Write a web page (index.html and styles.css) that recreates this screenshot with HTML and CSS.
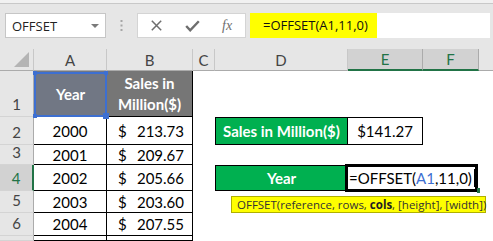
FILE: index.html
```html
<!DOCTYPE html>
<html lang="en">
<head>
  <meta charset="UTF-8">
  <title>OFFSET function</title>
  <link rel="stylesheet" href="styles.css">
</head>

<body>
  <div class="app">
    <div class="topLine"></div>

    <!-- Formula bar -->
    <div class="formulaBar">
      <div class="nameBox">
        <span>OFFSET</span>
        <span class="dropArrow"></span>
      </div>
      <div class="grip">
        <svg width="3" height="11" viewBox="0 0 3 11"><rect x="0.5" y="0" width="2" height="2"/><rect x="0.5" y="4.5" width="2" height="2"/><rect x="0.5" y="9" width="2" height="2"/></svg>
      </div>
      <div class="fxBox">
        <svg class="cancelIcon" width="11" height="11" viewBox="0 0 11 11"><path d="M0.8 0.8L10.2 10.2M10.2 0.8L0.8 10.2"/></svg>
        <svg class="enterIcon" width="15" height="12" viewBox="0 0 15 12"><path d="M1.2 6L5.2 10.3L13.8 1.2"/></svg>
        <span class="fx">fx</span>
      </div>
      <div class="formulaInput">
        <span class="formulaText">=OFFSET(A1,11,0)</span>
      </div>
    </div>

    <!-- Sheet grid -->
    <div class="sheet">
      <!-- column headers -->
      <div class="colHead corner"><span class="selectAll"></span></div>
      <div class="colHead">A</div>
      <div class="colHead">B</div>
      <div class="colHead">C</div>
      <div class="colHead">D</div>
      <div class="colHead active">E</div>
      <div class="colHead active">F</div>
      <div class="colHead last"></div>

      <!-- row 1 -->
      <div class="rowHead">1</div>
      <div class="cell head yearHead">
        Year
        <span class="refBox">
          <span class="handle tl"></span><span class="handle tr"></span><span class="handle bl"></span><span class="handle br"></span>
        </span>
      </div>
      <div class="cell head salesHead">Sales in<br>Million($)</div>
      <div class="cell"></div>
      <div class="cell"></div>
      <div class="cell"></div>
      <div class="cell"></div>
      <div class="cell"></div>

      <!-- row 2 -->
      <div class="rowHead">2</div>
      <div class="cell tbl">2000</div>
      <div class="cell tbl money"><span>$</span><span>213.73</span></div>
      <div class="cell"></div>
      <div class="cell green">Sales in Million($)</div>
      <div class="cell result">$141.27</div>
      <div class="cell"></div>
      <div class="cell"></div>

      <!-- row 3 -->
      <div class="rowHead">3</div>
      <div class="cell tbl">2001</div>
      <div class="cell tbl money"><span>$</span><span>209.67</span></div>
      <div class="cell"></div>
      <div class="cell"></div>
      <div class="cell"></div>
      <div class="cell"></div>
      <div class="cell"></div>

      <!-- row 4 -->
      <div class="rowHead active">4</div>
      <div class="cell tbl">2002</div>
      <div class="cell tbl money"><span>$</span><span>205.66</span></div>
      <div class="cell"></div>
      <div class="cell green">Year</div>
      <div class="cell editor">
        <span>=OFFSET(<span class="ref">A1</span>,11,0)</span><span class="caret"></span>
        <span class="fillHandle"></span>
      </div>
      <div class="cell"></div>

      <!-- row 5 -->
      <div class="rowHead">5</div>
      <div class="cell tbl">2003</div>
      <div class="cell tbl money"><span>$</span><span>203.60</span></div>
      <div class="cell"></div>
      <div class="cell"></div>
      <div class="cell"></div>
      <div class="cell"></div>
      <div class="cell"></div>

      <!-- row 6 -->
      <div class="rowHead">6</div>
      <div class="cell tbl">2004</div>
      <div class="cell tbl money"><span>$</span><span>207.55</span></div>
      <div class="cell"></div>
      <div class="cell"></div>
      <div class="cell"></div>
      <div class="cell"></div>
      <div class="cell"></div>

      <!-- row 7 (mostly below the fold) -->
      <div class="rowHead"></div>
      <div class="cell tbl"></div>
      <div class="cell tbl"></div>
      <div class="cell"></div>
      <div class="cell"></div>
      <div class="cell"></div>
      <div class="cell"></div>
      <div class="cell"></div>

      <!-- function tooltip -->
      <div class="tooltip">OFFSET(reference, rows, <b>cols</b>, [height], [width])</div>
    </div>
  </div>
</body>
</html>
```

FILE: styles.css
```css
* {
  box-sizing: border-box;
}
body {
  margin: 0;
  background: #fff;
  font-family: Lato, "Liberation Sans", sans-serif;
}
.app {
  width: 493px;
  height: 241px;
  overflow: hidden;
  background: #e6e6e6;
}
.topLine {
  height: 4px;
  background: #f1f1f1;
  border-bottom: 1px solid #c8c8c8;
}

/* formula bar */
.formulaBar {
  display: flex;
  align-items: flex-start;
  height: 45px;
  padding: 9px 0 0 5px;
  font-family: "Open Sans", "Liberation Sans", sans-serif;
}
.nameBox {
  width: 101px;
  height: 25px;
  display: flex;
  align-items: center;
  justify-content: space-between;
  padding: 0 6px 0 6px;
  background: #fff;
  border: 1px solid #c6c6c6;
  font-size: 13px;
  color: #222;
}
.dropArrow {
  width: 0;
  height: 0;
  border-left: 4px solid transparent;
  border-right: 4px solid transparent;
  border-top: 4px solid #7a7a7a;
  margin-top: 1px;
}
.grip {
  width: 31px;
  height: 25px;
  display: flex;
  align-items: center;
  justify-content: center;
}
.grip svg {
  fill: #a6a6a6;
}
.fxBox {
  width: 109px;
  height: 25px;
  display: flex;
  align-items: center;
  background: #fff;
  border: 1px solid #d4d4d4;
}
.cancelIcon {
  margin-left: 13px;
  stroke: #6e6e6e;
  stroke-width: 1.5;
  fill: none;
}
.enterIcon {
  margin-left: 23px;
  stroke: #6e6e6e;
  stroke-width: 2.4;
  fill: none;
}
.fx {
  margin-left: 22px;
  font-family: "Liberation Serif", serif;
  font-style: italic;
  font-size: 14px;
  color: #6e6e6e;
}
.formulaInput {
  width: 240px;
  height: 25px;
  margin-left: 4px;
  background: #fff;
}
.formulaText {
  display: inline-block;
  width: 127px;
  height: 25px;
  line-height: 25px;
  padding-left: 13px;
  background: #ffff00;
  font-size: 13px;
  color: #111;
}

/* sheet */
.sheet {
  position: relative;
  display: grid;
  grid-template-columns: 34px 73px 86px 22px 133px 75px 56px 1fr;
  grid-template-rows: 22px 46px 28px 20px 26px 22px 23px 1fr;
  height: 192px;
  background: #fff;
  font-size: 15px;
}
.colHead {
  display: flex;
  align-items: center;
  justify-content: center;
  background: #e6e6e6;
  border-right: 1px solid #c8c8c8;
  border-bottom: 1px solid #ababab;
  color: #444;
}
.colHead.active {
  background: #d2d2d2;
  color: #217346;
  border-right-color: #ababab;
  border-bottom: 2px solid #217346;
}
.colHead.last {
  border-right: 0;
}
.corner {
  align-items: flex-end;
  justify-content: flex-end;
  padding: 0 4px 3px 0;
}
.selectAll {
  width: 0;
  height: 0;
  border-left: 15px solid transparent;
  border-bottom: 15px solid #b4b4b4;
}
.rowHead {
  display: flex;
  align-items: flex-end;
  justify-content: center;
  padding-bottom: 3px;
  background: #e6e6e6;
  border-right: 1px solid #ababab;
  border-bottom: 1px solid #d4d4d4;
  color: #444;
  line-height: 18px;
}
.rowHead.active {
  background: #d2d2d2;
  color: #217346;
  border-right: 2px solid #217346;
}

.cell {
  display: flex;
  align-items: center;
  justify-content: center;
  color: #000;
}
.tbl {
  border-right: 1px solid #000;
  border-bottom: 1px solid #000;
}
.money {
  justify-content: space-between;
  padding: 0 8px 0 11px;
}
.head {
  font-weight: bold;
  color: #fff;
  text-align: center;
  line-height: 21px;
}
.yearHead {
  position: relative;
  background: #717784;
}
.salesHead {
  background: #767676;
  border-right: 1px solid #000;
  border-bottom: 1px solid #000;
  padding-top: 1px;
}

/* referenced range A1 */
.refBox {
  position: absolute;
  top: 1px;
  left: 0;
  right: 0;
  bottom: 0;
  border: 2px solid #3d6fd1;
}
.handle {
  position: absolute;
  width: 4px;
  height: 4px;
  background: #3d6fd1;
}
.handle.tl { left: -3px; top: -3px; }
.handle.tr { right: -3px; top: -3px; }
.handle.bl { left: -3px; bottom: -3px; }
.handle.br { right: -4px; bottom: -4px; width: 6px; height: 6px; }

.green {
  background: #00b050;
  color: #fff;
  font-weight: bold;
  border: 1px solid #000;
}
.result {
  border: 1px solid #000;
  border-left: 0;
}

/* cell in edit mode */
.editor {
  position: relative;
  grid-column: span 2;
  margin: -1px 1px -1px -3px;
  justify-content: flex-start;
  padding-left: 1px;
  background: #fff;
  border: 3px solid #000;
}
.ref {
  color: #3d6fd1;
}
.caret {
  width: 1px;
  height: 18px;
  margin-left: 2px;
  background: #000;
}
.fillHandle {
  position: absolute;
  right: -5px;
  bottom: -4px;
  width: 3px;
  height: 5px;
  background: #217346;
}

.tooltip {
  position: absolute;
  left: 231px;
  top: 147px;
  width: 255px;
  height: 17px;
  padding-left: 5px;
  background: #ffff00;
  border: 1px solid #b0b000;
  font-family: "Open Sans", "Liberation Sans", sans-serif;
  font-size: 11.5px;
  line-height: 15px;
  color: #333;
  white-space: nowrap;
}
.tooltip b {
  color: #222;
}
```
